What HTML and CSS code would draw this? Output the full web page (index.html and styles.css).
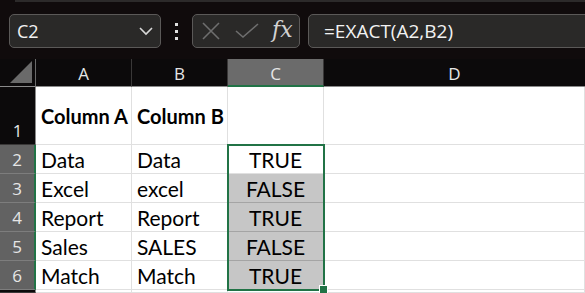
FILE: index.html
```html
<!DOCTYPE html>
<html lang="en">
<head>
  <meta charset="UTF-8" />
  <title>EXACT</title>
  <link rel="stylesheet" href="styles.css">
</head>
<body>
  <div class="topline"></div>
  <div class="bar">
    <div class="namebox">
      <span class="name">C2</span>
      <svg class="chev" width="16" height="10" viewBox="0 0 16 10"><path d="M2 2 L8 8 L14 2" fill="none" stroke="#d8d8d8" stroke-width="1.6"/></svg>
    </div>
    <div class="dots"><i></i><i></i><i></i></div>
    <div class="fxbox">
      <svg width="20" height="18" viewBox="0 0 20 18"><path d="M2 1 L18 17 M18 1 L2 17" stroke="#6e6e6e" stroke-width="1.6" fill="none"/></svg>
      <svg width="24" height="16" viewBox="0 0 24 16"><path d="M1 8 L8 14 L23 1" stroke="#6e6e6e" stroke-width="1.6" fill="none"/></svg>
      <span class="fx">fx</span>
    </div>
    <div class="formula">=EXACT(A2,B2)</div>
  </div>
  <div class="sheet">
    <div class="hd corner"><svg width="22" height="22" viewBox="0 0 22 22"><path d="M22 0 L22 22 L0 22 Z" fill="#6a6a6a"/></svg></div>
    <div class="hd col">A</div>
    <div class="hd col">B</div>
    <div class="hd col sel">C</div>
    <div class="hd col last">D</div>

    <div class="hd row first">1</div>
    <div class="cell bold">Column A</div>
    <div class="cell bold">Column B</div>
    <div class="cell"></div>
    <div class="cell"></div>

    <div class="hd row sel">2</div>
    <div class="cell">Data</div>
    <div class="cell">Data</div>
    <div class="cell mid">TRUE</div>
    <div class="cell"></div>

    <div class="hd row sel">3</div>
    <div class="cell">Excel</div>
    <div class="cell">excel</div>
    <div class="cell mid shade">FALSE</div>
    <div class="cell"></div>

    <div class="hd row sel">4</div>
    <div class="cell">Report</div>
    <div class="cell">Report</div>
    <div class="cell mid shade">TRUE</div>
    <div class="cell"></div>

    <div class="hd row sel">5</div>
    <div class="cell">Sales</div>
    <div class="cell">SALES</div>
    <div class="cell mid shade">FALSE</div>
    <div class="cell"></div>

    <div class="hd row sel">6</div>
    <div class="cell">Match</div>
    <div class="cell">Match</div>
    <div class="cell mid shade">TRUE</div>
    <div class="cell"></div>

    <div class="hd row"></div>
    <div class="cell"></div>
    <div class="cell"></div>
    <div class="cell"></div>
    <div class="cell"></div>

    <div class="selection"><span class="handle"></span></div>
  </div>
</body>
</html>
```

FILE: styles.css
```css
body {
  margin: 0;
  width: 585px;
  height: 293px;
  overflow: hidden;
  background: #100b0c;
  font-family: "Open Sans", "Noto Sans", sans-serif;
  color: #f2f2f2;
}
.topline {
  height: 2px;
  margin-left: 15px;
  background: #2c2a2a;
}
.bar {
  display: flex;
  height: 57px;
  padding-top: 12px;
  box-sizing: border-box;
  align-items: flex-start;
}
.namebox, .fxbox, .formula {
  height: 34px;
  box-sizing: border-box;
  border: 1px solid #5b5958;
  border-radius: 5px;
  background: #2a2928;
  display: flex;
  align-items: center;
}
.namebox {
  margin-left: 9px;
  width: 152px;
  padding: 0 6px 0 7px;
  justify-content: space-between;
}
.name {
  font-size: 18px;
}
.dots {
  width: 31px;
  display: flex;
  flex-direction: column;
  align-items: center;
  gap: 4px;
  padding-top: 9px;
}
.dots i {
  width: 3px;
  height: 3px;
  background: #e0e0e0;
}
.fxbox {
  width: 108px;
  padding-left: 8px;
  gap: 14px;
}
.fx {
  font-family: "DejaVu Serif", "Liberation Serif", serif;
  font-style: italic;
  font-size: 22px;
  color: #d2d2d2;
  margin-left: -1px;
  margin-top: -4px;
}
.formula {
  flex: 1;
  margin-left: 8px;
  margin-right: -10px;
  padding-left: 15px;
  font-size: 19px;
}
.sheet {
  position: relative;
  display: grid;
  grid-template-columns: 36px 96px 96px 96px 1fr;
  grid-template-rows: 28px 58px repeat(5, 29px) 3px;
}
.hd {
  background: #0c0a0b;
  color: #e6e6e6;
  font-size: 17px;
  display: flex;
  align-items: center;
  justify-content: center;
  box-sizing: border-box;
}
.corner {
  border-right: 1px solid #6a6a6a;
  border-bottom: 1px solid #8a8a8a;
  align-items: flex-end;
  justify-content: flex-end;
  padding: 0 3px 3px 0;
}
.col {
  border-right: 1px solid #3a3838;
  border-bottom: 1px solid #8a8a8a;
  padding-top: 2px;
}
.col.last {
  border-right: none;
}
.col.sel {
  background: #6b6b6b;
  border-bottom: 2px solid #217346;
}
.row {
  border-right: 1px solid #8a8a8a;
  border-bottom: 1px solid #3a3838;
}
.row.first {
  align-items: flex-end;
  padding-bottom: 2px;
}
.row.sel {
  background: #626262;
  border-right: 2px solid #217346;
  border-bottom: 1px solid #7d7d7d;
}
.cell {
  background: #fff;
  color: #000;
  font-family: "Lato", "Liberation Sans", sans-serif;
  font-size: 21px;
  display: flex;
  align-items: center;
  padding-left: 5px;
  box-sizing: border-box;
  border-right: 1px solid #e0e0e0;
  border-bottom: 1px solid #e0e0e0;
  white-space: nowrap;
}
.bold {
  font-weight: bold;
  font-size: 20px;
}
.mid {
  justify-content: center;
  padding-left: 0;
}
.shade {
  background: #c6c6c6;
  border-bottom-color: #a4a4a4;
  border-right-color: #a4a4a4;
}
.selection {
  position: absolute;
  left: 227px;
  top: 85px;
  width: 98px;
  height: 147px;
  border: 2px solid #217346;
  box-sizing: border-box;
}
.handle {
  position: absolute;
  right: -5px;
  bottom: -5px;
  width: 7px;
  height: 7px;
  background: #217346;
  border: 1px solid #fff;
}
```
